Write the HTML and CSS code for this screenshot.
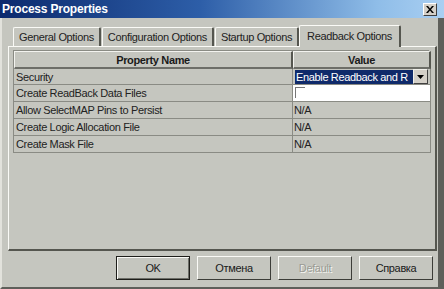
FILE: index.html
```html
<!DOCTYPE html>
<html>
<head>
<meta charset="utf-8">
<link rel="stylesheet" href="styles.css">
</head>
<body>
<div class="window">
  <div class="titlebar">
    <span class="title">Process Properties</span>
    <span class="close">
      <svg width="8" height="7" viewBox="0 0 8 7"><path d="M0 0h2l2 2.5L6 0h2L5 3.5 8 7H6L4 4.5 2 7H0l3-3.5z" fill="#000"/></svg>
    </span>
  </div>
  <div class="tabs">
    <div class="tab">General Options</div>
    <div class="tab">Configuration Options</div>
    <div class="tab">Startup Options</div>
    <div class="tab active">Readback Options</div>
  </div>
  <div class="panel">
    <div class="grid">
      <div class="hcell">Property Name</div>
      <div class="hcell">Value</div>
      <div class="cell">Security</div>
      <div class="cell vcell">
        <div class="combo"><span class="sel">Enable Readback and R</span><span class="drop"><svg width="7" height="4" viewBox="0 0 7 4"><path d="M0 0h7L3.5 4z" fill="#000"/></svg></span></div>
      </div>
      <div class="cell">Create ReadBack Data Files</div>
      <div class="cell vcell white"><span class="check"></span></div>
      <div class="cell">Allow SelectMAP Pins to Persist</div>
      <div class="cell vcell">N/A</div>
      <div class="cell">Create Logic Allocation File</div>
      <div class="cell vcell">N/A</div>
      <div class="cell">Create Mask File</div>
      <div class="cell vcell">N/A</div>
    </div>
  </div>
  <div class="buttons">
    <div class="btn default"><span>OK</span></div>
    <div class="btn"><span>Отмена</span></div>
    <div class="btn disabled"><span>Default</span></div>
    <div class="btn"><span>Справка</span></div>
  </div>
</div>
</body>
</html>
```

FILE: styles.css
```css
* { box-sizing: border-box; }
html, body { margin: 0; padding: 0; }
body {
  width: 444px;
  height: 289px;
  overflow: hidden;
  background: #c5c6bf;
  font-family: "Liberation Sans", Arial, sans-serif;
  font-size: 11px;
  letter-spacing: -0.35px;
  color: #000;
}
.window {
  width: 444px;
  height: 289px;
  background: #c5c6bf;
  border-left: 2px solid #e2e2dc;
  border-right: 6px solid #5e5f5a;
  border-bottom: 2px solid #5e5f5a;
  display: flex;
  flex-direction: column;
}
.titlebar {
  height: 18px;
  margin-left: -2px;
  margin-right: -6px;
  background: linear-gradient(to right, #0c2a6e 0%, #2d5ea8 45%, #8fbde8 85%, #a9cff2 100%);
  display: flex;
  align-items: center;
  padding: 0 7px 0 2px;
}
.title {
  color: #fff;
  font-weight: bold;
  font-size: 12px;
  letter-spacing: -0.2px;
}
.close {
  margin-left: auto;
  width: 14px;
  height: 13px;
  background: #d4d0c8;
  border: 1px solid;
  border-color: #fff #404040 #404040 #fff;
  display: flex;
  align-items: center;
  justify-content: center;
}
.tabs {
  display: flex;
  align-items: flex-end;
  height: 28px;
  padding-left: 11px;
}
.tab {
  height: 19px;
  padding: 3px 5px 0 5px;
  border-left: 1px solid #fafaf6;
  border-top: 1px solid #fafaf6;
  border-right: 2px solid #55564f;
  border-radius: 2px 2px 0 0;
  margin-right: 1px;
  white-space: nowrap;
  color: #222;
}
.tab.active {
  height: 22px;
  padding: 4px 7px 0 7px;
  margin-bottom: -1px;
  background: #c5c6bf;
  position: relative;
  z-index: 1;
  margin-left: -1px;
}
.panel {
  margin: 0 1px 0 6px;
  height: 205px;
  border-top: 1px solid #fafaf6;
  border-left: 1px solid #fafaf6;
  border-right: 2px solid #55564f;
  border-bottom: 2px solid #55564f;
  padding: 3px 6px 0 4px;
}
.grid {
  display: grid;
  grid-template-columns: 279px 138px;
  grid-auto-rows: 17px;
  border-left: 1px solid #8a8b84;
  border-top: 1px solid #8a8b84;
}
.hcell {
  height: 18px;
  font-weight: bold;
  text-align: center;
  line-height: 16px;
  border-right: 2px solid #55564f;
  border-bottom: 2px solid #6d6e68;
  border-left: 1px solid #f3f3ef;
  border-top: 1px solid #f3f3ef;
  color: #1a1a1a;
}
.cell {
  border-right: 1px solid #8a8b84;
  border-bottom: 1px solid #8a8b84;
  padding-left: 2px;
  line-height: 16px;
  white-space: nowrap;
  overflow: hidden;
  color: #222;
}
.grid > .cell:nth-child(3), .grid > .cell:nth-child(4) { margin-top: 1px; }
.vcell { padding-left: 1px; }
.white { background: #fff; }
.combo {
  display: flex;
  height: 16px;
  padding: 1px 0 0 1px;
}
.sel {
  background: #0f2a6a;
  color: #fff;
  width: 118px;
  line-height: 14px;
  overflow: hidden;
  white-space: nowrap;
  padding-left: 1px;
}
.drop {
  width: 15px;
  height: 15px;
  margin-top: -1px;
  background: #d4d0c8;
  border: 1px solid;
  border-color: #f0f0ea #404040 #404040 #f0f0ea;
  display: flex;
  align-items: center;
  justify-content: center;
}
.check {
  display: inline-block;
  width: 10px;
  height: 11px;
  margin-top: 2px;
  margin-left: 1px;
  border-left: 1px solid #777;
  border-top: 1px solid #777;
  background: #fff;
  vertical-align: top;
}
.buttons {
  display: flex;
  justify-content: flex-end;
  gap: 7px;
  padding: 5px 5px 0 0;
}
.btn {
  width: 74px;
  height: 24px;
  border: 1px solid;
  border-color: #fafaf6 #3c3d38 #3c3d38 #fafaf6;
  display: flex;
  align-items: center;
  justify-content: center;
  color: #1a1a1a;
}
.btn.default {
  border: 1px solid #1e1e1a;
  box-shadow: inset 1px 1px 0 #fafaf6, inset -1px -1px 0 #6d6e68;
}
.btn.disabled span {
  color: #9a9b94;
  text-shadow: 1px 1px 0 #f4f4f0;
}
```
